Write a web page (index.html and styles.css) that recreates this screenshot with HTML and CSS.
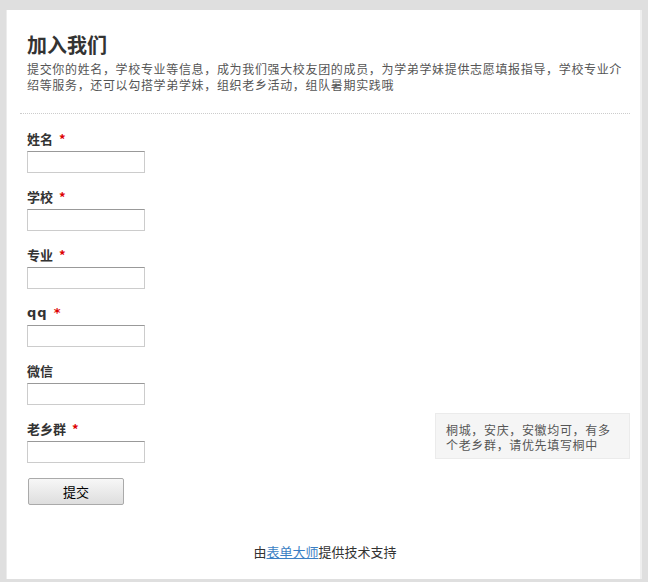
FILE: index.html
```html
<!DOCTYPE html>
<html lang="zh-CN">
<head>
    <meta charset="UTF-8">
    <meta name="viewport" content="width=device-width, initial-scale=1.0">
    <title>加入我们</title>
    <link rel="stylesheet" href="styles.css">
</head>
<body>
    <div class="panel">
        <header class="form-head">
            <h1>加入我们</h1>
            <p class="desc">提交你的姓名，学校专业等信息，成为我们强大校友团的成员，为学弟学妹提供志愿填报指导，学校专业介绍等服务，还可以勾搭学弟学妹，组织老乡活动，组队暑期实践哦</p>
        </header>

        <form class="form-body">
            <div class="field">
                <label>姓名<span class="req">*</span></label>
                <input type="text">
            </div>
            <div class="field">
                <label>学校<span class="req">*</span></label>
                <input type="text">
            </div>
            <div class="field">
                <label>专业<span class="req">*</span></label>
                <input type="text">
            </div>
            <div class="field">
                <label class="latin">qq<span class="req">*</span></label>
                <input type="text">
            </div>
            <div class="field">
                <label>微信</label>
                <input type="text">
            </div>
            <div class="field field-row">
                <div>
                    <label>老乡群<span class="req">*</span></label>
                    <input type="text">
                </div>
                <div class="help">桐城，安庆，安徽均可，有多个老乡群，请优先填写桐中</div>
            </div>
            <button type="button" class="submit">提交</button>
        </form>

        <footer class="powered">由<a href="#">表单大师</a>提供技术支持</footer>
    </div>
</body>
</html>
```

FILE: styles.css
```css
* {
    margin: 0;
    padding: 0;
    box-sizing: border-box;
}

body {
    background: #dfdfdf;
    font-family: "Noto Sans CJK SC", "Liberation Sans", sans-serif;
    color: #333;
}

.panel {
    margin: 10px 0 0 6px;
    width: 636px;
    height: 569px;
    background: #fff;
    border-left: 1px solid #ececec;
    border-right: 2px solid #efefef;
    padding: 23px 10px 0 13px;
}

.form-head {
    padding: 0 7px 20px 7px;
    border-bottom: 1px dotted #ccc;
}

.form-head h1 {
    font-size: 20px;
    line-height: 24px;
    font-weight: bold;
    color: #333;
}

.desc {
    margin-top: 4px;
    font-size: 12px;
    line-height: 16px;
    letter-spacing: 0.66px;
    color: #555;
}

.form-body {
    padding: 16px 0 0 7px;
}

.field {
    margin-bottom: 15px;
}

.field label {
    display: block;
    height: 18px;
    font-size: 13px;
    line-height: 18px;
    font-weight: bold;
    color: #333;
}

.field label.latin {
    font-family: "DejaVu Sans", sans-serif;
    letter-spacing: 1px;
}

.req {
    color: #d00;
    margin-left: 6px;
}

.field input {
    display: block;
    margin-top: 3px;
    width: 118px;
    height: 22px;
    border: 1px solid #ccc;
    border-top-color: #999;
    background: #fff;
}

.field-row {
    display: flex;
    justify-content: space-between;
    align-items: flex-start;
}

.help {
    margin-top: -7px;
    width: 195px;
    padding: 8px 9px 6px 10px;
    background: #f5f5f5;
    border: 1px solid #ebebeb;
    font-size: 12px;
    line-height: 15px;
    letter-spacing: 0.66px;
    color: #555;
}

.submit {
    display: block;
    margin-left: 1px;
    width: 96px;
    height: 27px;
    border: 1px solid #aaa;
    border-radius: 2px;
    background: linear-gradient(#f7f7f7, #dedede);
    font-family: "Noto Sans CJK SC", sans-serif;
    font-size: 13px;
    color: #000;
}

.powered {
    margin-top: 38px;
    text-align: center;
    font-size: 13px;
    line-height: 18px;
    color: #333;
}

.powered a {
    color: #3b7fc4;
    text-decoration: underline;
}
```
